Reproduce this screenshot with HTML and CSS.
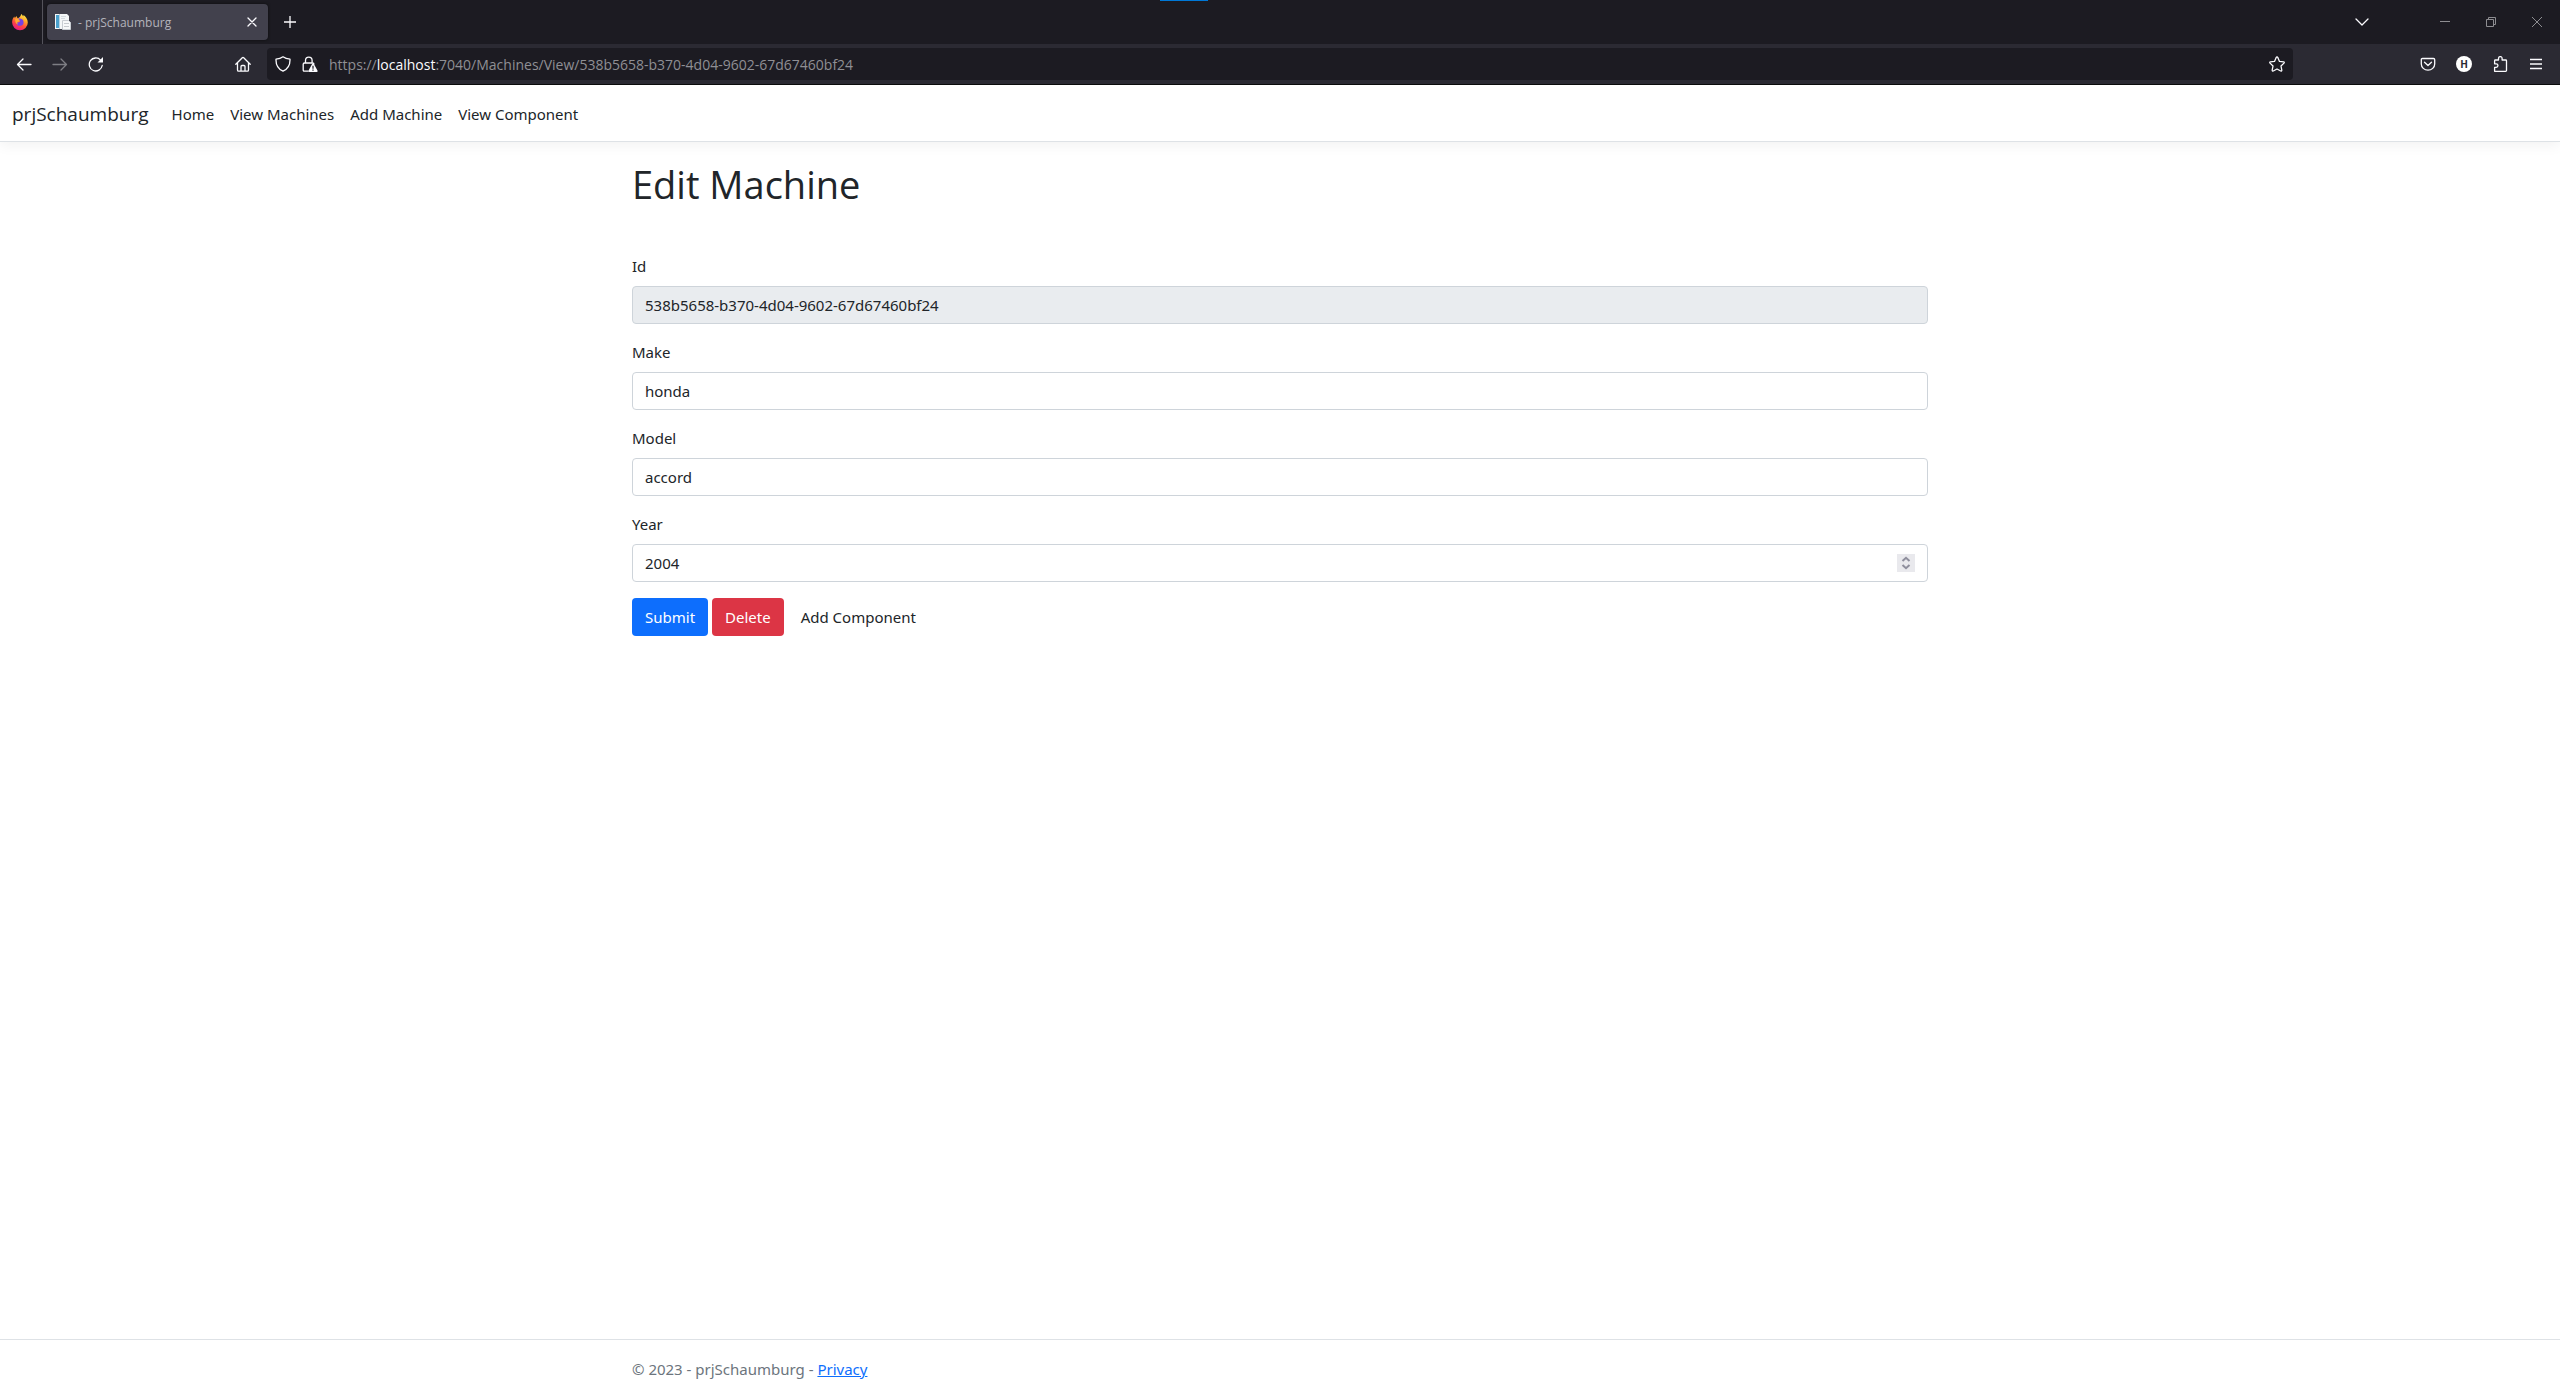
FILE: index.html
```html
<!DOCTYPE html>
<html lang="en">
<head>
<meta charset="utf-8">
<title>- prjSchaumburg</title>
<link rel="stylesheet" href="styles.css">
</head>
<body>
<div class="browser">
  <div class="tabbar">
    <span class="activity"></span>
    <button class="view-button" aria-label="Firefox View">
      <svg width="18" height="18" viewBox="0 0 18 18">
        <defs>
          <linearGradient id="flame" x1="0.8" y1="0" x2="0.3" y2="1">
            <stop offset="0" stop-color="#fff44f"/><stop offset="0.35" stop-color="#ffa52a"/>
            <stop offset="0.65" stop-color="#ff4a3c"/><stop offset="1" stop-color="#e8168c"/>
          </linearGradient>
        </defs>
        <path fill="url(#flame)" d="M10.2 1c.9.6 1.500 1.500 1.900 2.500.3-.4.400-1 .400-1.500 2 1.500 4.300 4 4.300 7.400A7.800 7.800 0 0 1 9 17.200 7.900 7.900 0 0 1 1.100 9.300C1.100 7 2 4.800 3.300 3.400l.5 1.500C4.600 4.300 5 3.500 5.200 3c.7.7 1 1.400 1.300 2.300C8.500 5 9.800 3 10.200 1z"/>
        <path fill="#7542e5" d="M7 5.800c1.500-.5 5.400-.4 5.600 3.400a3.700 3.700 0 0 1-7.300.8c0-.7 1-.8 1.700-.6C8.200 9.500 9 8.700 9.200 8c-1 0-1.900-1.100-2.200-2.200z"/>
        <path fill="#ffab32" d="M4.300 6c1.500-.4 3.300 0 4.400 1.200-.2.900-1.400 1.300-2 1.700-.8.700-.2 2 .5 2.500C5 11.500 3.800 8.600 4.300 6z"/>
      </svg>
    </button>
    <div class="tab">
      <svg width="16" height="16" viewBox="0 0 16 16">
        <path fill="#f4f6f8" d="M0 0h12l2 2v13H0z"/>
        <path fill="#4aa0cc" d="M1 1h3v13H1z"/><path fill="#b8d4e4" d="M4 0h1v15H4z"/>
        <path fill="#d5dbe0" d="M6 2h5v1H6zM6 4h4v1H6z"/>
        <path fill="#f7f8fa" stroke="#c8ccd2" d="M7.500 6.500h6l2 2v7h-8z"/>
        <path stroke="#c5c9ce" d="M9 9.500h5M9 12.500h5"/>
      </svg>
      <span class="tab-title">- prjSchaumburg</span>
      <button class="tab-close" aria-label="Close tab">
        <svg width="10" height="10" viewBox="0 0 10 10"><path class="line" d="M1 1l8 8M9 1L1 9"/></svg>
      </button>
    </div>
    <button class="icon-button" aria-label="New tab">
      <svg width="12" height="12" viewBox="0 0 12 12"><path class="line" d="M6 0v12M0 6h12"/></svg>
    </button>
    <button class="icon-button list-tabs" aria-label="List all tabs">
      <svg width="14" height="14" viewBox="0 0 14 14"><path class="line" d="M1 4l6 6 6-6"/></svg>
    </button>
    <button class="window-button" aria-label="Minimize">
      <svg width="10" height="10" viewBox="0 0 10 10"><path d="M0 4.500h10"/></svg>
    </button>
    <button class="window-button" aria-label="Restore">
      <svg width="10" height="10" viewBox="0 0 10 10"><path d="M.5 2.500h7v7h-7zM2.500 2.500v-2h7v7h-2"/></svg>
    </button>
    <button class="window-button" aria-label="Close">
      <svg width="10" height="10" viewBox="0 0 10 10"><path d="M0 0l10 10M10 0L0 10"/></svg>
    </button>
  </div>

  <div class="toolbar">
    <button class="icon-button" aria-label="Back">
      <svg width="16" height="16" viewBox="0 0 16 16"><path class="line" d="M15 8.500H1.500M7 3L1.500 8.500 7 14"/></svg>
    </button>
    <button class="icon-button" aria-label="Forward" disabled>
      <svg width="16" height="16" viewBox="0 0 16 16"><path class="line" d="M1 8.500h13.500M9 3l5.500 5.500L9 14"/></svg>
    </button>
    <button class="icon-button" aria-label="Reload">
      <svg width="16" height="16" viewBox="0 0 16 16"><path class="line" d="M14.200 9.500a6.500 6.500 0 1 1-1.600-5.400l1.200 1.300"/><path fill="#fbfbfe" d="M15 1v5.500H9.500z"/></svg>
    </button>
    <span class="spring"></span>
    <button class="icon-button" aria-label="Home">
      <svg width="16" height="16" viewBox="0 0 16 16"><path class="line" d="M.8 8.300L7.300 1.700q.7-.7 1.400 0l6.500 6.600M2.500 7v7q0 1.200 1.200 1.200h8.600q1.200 0 1.200-1.200V7M6 15v-4.500q0-1 1-1h2q1 0 1 1V15"/></svg>
    </button>
    <div class="urlbar">
      <svg width="16" height="16" viewBox="0 0 16 16"><path class="line" d="M8 .8c2 1.500 4.500 2.200 7 2.400.2 5-1.500 9.500-7 12C2.500 12.700.8 8.200 1 3.200 3.500 3 6 2.300 8 .8z"/></svg>
      <svg width="16" height="16" viewBox="0 0 16 16"><path class="line" d="M3.500 7V4.500a3.300 3.300 0 0 1 6.600 0V7M6 15.200H2.500Q1.200 15.200 1.200 14V8.300Q1.200 7 2.500 7h8.200q1.200 0 1.200 1"/><path fill="#fbfbfe" d="M11 7.500q.6 0 .9.600l3.700 6.600q.3 1.300-1 1.300H7.400q-1.300 0-1-1.300l3.700-6.600q.3-.6.900-.6z"/><path stroke="#1c1b22" stroke-width="1.200" d="M11 9.800v3M11 13.600v1.200"/></svg>
      <div class="address" role="textbox" aria-label="Address">https://<span class="host">localhost</span>:7040/Machines/View/538b5658-b370-4d04-9602-67d67460bf24</div>
      <button class="bookmark" aria-label="Bookmark this page">
        <svg width="16" height="16" viewBox="0 0 16 16"><path class="line" d="M8 1q.6 0 .8.600L10.500 5.400l4.100.5q1.100.3.400 1.200l-3 2.900.8 4.200q0 1.200-1.100.8L8 13l-3.700 2q-1.100.4-1.100-.8L4 10 1 7.100q-.7-.9.400-1.200l4.100-.5L7.200 1.600Q7.400 1 8 1z"/></svg>
      </button>
    </div>
    <span class="spring"></span>
    <button class="icon-button" aria-label="Save to Pocket">
      <svg width="16" height="16" viewBox="0 0 16 16"><path class="line" d="M2.500 2.500h11q1.200 0 1.200 1.200V8a6.700 6.200 0 0 1-13.400 0V3.700Q1.300 2.500 2.500 2.500zM4.500 6.200L8 9.500l3.500-3.300"/></svg>
    </button>
    <button class="icon-button" aria-label="Account">
      <span class="avatar">H</span>
    </button>
    <button class="icon-button" aria-label="Extensions">
      <svg width="16" height="16" viewBox="0 0 16 16"><path class="line" d="M2.600 15.300V11.300H4.200a1.700 1.700 0 0 0 0-3.500H2.600V4.800q0-.8.800-.8H6.500V2.400a1.800 1.800 0 0 1 3.600 0V4h3.600q.8 0 .8.800v9.700q0 .8-.8.800z"/></svg>
    </button>
    <button class="icon-button" aria-label="Open application menu">
      <svg width="12" height="12" viewBox="0 0 12 12"><path class="line" d="M0 1.500h12M0 6h12M0 10.500h12"/></svg>
    </button>
  </div>
</div>

<header class="site-header">
  <nav class="navbar">
    <a class="brand" href="#">prjSchaumburg</a>
    <a class="nav-link" href="#">Home</a>
    <a class="nav-link" href="#">View Machines</a>
    <a class="nav-link" href="#">Add Machine</a>
    <a class="nav-link" href="#">View Component</a>
  </nav>
</header>

<main class="container">
  <h1>Edit Machine</h1>
  <form class="machine-form">
    <div class="field">
      <label for="id">Id</label>
      <input class="control" id="id" type="text" value="538b5658-b370-4d04-9602-67d67460bf24" readonly>
    </div>
    <div class="field">
      <label for="make">Make</label>
      <input class="control" id="make" type="text" value="honda">
    </div>
    <div class="field">
      <label for="model">Model</label>
      <input class="control" id="model" type="text" value="accord">
    </div>
    <div class="field">
      <label for="year">Year</label>
      <div class="number">
        <input class="control" id="year" type="number" value="2004">
        <svg class="spinner" width="18" height="18" viewBox="0 0 18 18"><path d="M5.500 7L9 3.800 12.500 7M5.500 11L9 14.200l3.500-3.200"/></svg>
      </div>
    </div>
    <div class="actions">
      <button class="btn btn-primary" type="submit">Submit</button>
      <button class="btn btn-danger" type="button">Delete</button>
      <a class="btn" href="#">Add Component</a>
    </div>
  </form>
</main>

<footer class="site-footer">
  <div class="container">© 2023 - prjSchaumburg - <a href="#">Privacy</a></div>
</footer>
</body>
</html>
```
FILE: styles.css
```css
* { box-sizing: border-box; }

body {
  margin: 0;
  min-height: 100vh;
  display: flex;
  flex-direction: column;
  font-family: "Noto Sans", "Open Sans", sans-serif;
  font-size: 15px;
  line-height: 24px;
  color: #212529;
  background: #fff;
}

button, input { font: inherit; color: inherit; }
button { border: 0; background: none; padding: 0; }
svg { display: block; flex: none; fill: none; }

/* Browser window */
.browser {
  color: #fbfbfe;
  background: #2b2a33;
  border-bottom: 1px solid #0c0c0d;
  font-family: "Open Sans", "Noto Sans", sans-serif;
}
.line {
  stroke: #fbfbfe;
  stroke-width: 1.3;
  stroke-linecap: round;
  stroke-linejoin: round;
}
.tabbar {
  position: relative;
  display: flex;
  align-items: center;
  height: 44px;
  background: #1c1b22;
}
.activity {
  position: absolute;
  top: 0;
  left: calc(50% - 120px);
  width: 48px;
  height: 1px;
  background: #0078d7;
}
.view-button {
  display: grid;
  place-items: center;
  width: 43px;
  height: 44px;
  padding-right: 2px;
  border-right: 1px solid #54535b;
}
.tab {
  display: flex;
  align-items: center;
  gap: 7px;
  width: 221px;
  height: 36px;
  margin: 0 4px;
  padding: 0 11px 0 8px;
  border-radius: 4px;
  background: #42414d;
  box-shadow: 0 0 3px #0c0c0d;
}
.tab-title {
  flex: 1;
  padding-top: 1px;
  font-size: 12px;
  color: #b4b3bb;
}
.icon-button {
  display: grid;
  place-items: center;
  width: 36px;
  height: 32px;
}
.icon-button:disabled { opacity: 0.4; }
.list-tabs { margin: 0 42px 0 auto; }
.window-button {
  display: grid;
  place-items: center;
  width: 46px;
  height: 44px;
}
.window-button path { stroke: #8d8d91; }

.toolbar {
  display: flex;
  align-items: center;
  height: 40px;
  padding: 0 6px;
}
.spring { flex: 0 1 111px; }
.urlbar {
  flex: 1;
  display: flex;
  align-items: center;
  gap: 11px;
  height: 32px;
  margin: 0 6px;
  padding: 0 8px;
  border-radius: 4px;
  background: #1c1b22;
}
.address {
  flex: 1;
  padding-top: 2px;
  font-size: 14px;
  color: #8f8f94;
}
.host { color: #fbfbfe; }
.avatar {
  width: 16px;
  height: 16px;
  border-radius: 50%;
  background: #fff;
  color: #2b2a33;
  font-size: 10px;
  font-weight: 700;
  line-height: 16px;
}

/* Site */
.site-header {
  border-bottom: 1px solid #dee2e6;
  box-shadow: 0 4px 12px rgba(0, 0, 0, 0.05);
}
.navbar {
  display: flex;
  align-items: center;
  padding: 9px 12px 7px;
}
.brand {
  margin-right: 15px;
  font-family: "Open Sans", "Noto Sans", sans-serif;
  font-size: 19px;
  color: #212529;
  text-decoration: none;
}
.nav-link {
  padding: 8px;
  color: #212529;
  text-decoration: none;
}
.container {
  width: 100%;
  max-width: 1320px;
  margin: 0 auto;
  padding: 0 12px;
}
h1 {
  margin: 18px 0 46px;
  font-family: "Open Sans", "Noto Sans", sans-serif;
  font-size: 38px;
  font-weight: 400;
  line-height: 48px;
}
.machine-form {
  display: flex;
  flex-direction: column;
  gap: 16px;
}
.field {
  display: flex;
  flex-direction: column;
  gap: 8px;
}
.control {
  width: 100%;
  height: 38px;
  padding: 6px 12px;
  border: 1px solid #ced4da;
  border-radius: 4px;
  background: #fff;
}
.control:read-only { background: #e9ecef; }
.number { position: relative; }
.number .control { display: block; appearance: textfield; }
.spinner {
  position: absolute;
  top: 10px;
  right: 13px;
  background: #e9e9ed;
}
.spinner path { stroke: #8f8f9d; stroke-width: 2; }
.actions { display: flex; gap: 4px; }
.btn {
  padding: 6px 12px;
  border: 1px solid transparent;
  border-radius: 4px;
  color: #212529;
  text-decoration: none;
}
.btn-primary { background: #0d6efd; color: #fff; }
.btn-danger { background: #dc3545; color: #fff; }

.site-footer {
  margin-top: auto;
  border-top: 1px solid #dee2e6;
  line-height: 58px;
  color: #6c757d;
}
.site-footer a { color: #0d6efd; }
```
